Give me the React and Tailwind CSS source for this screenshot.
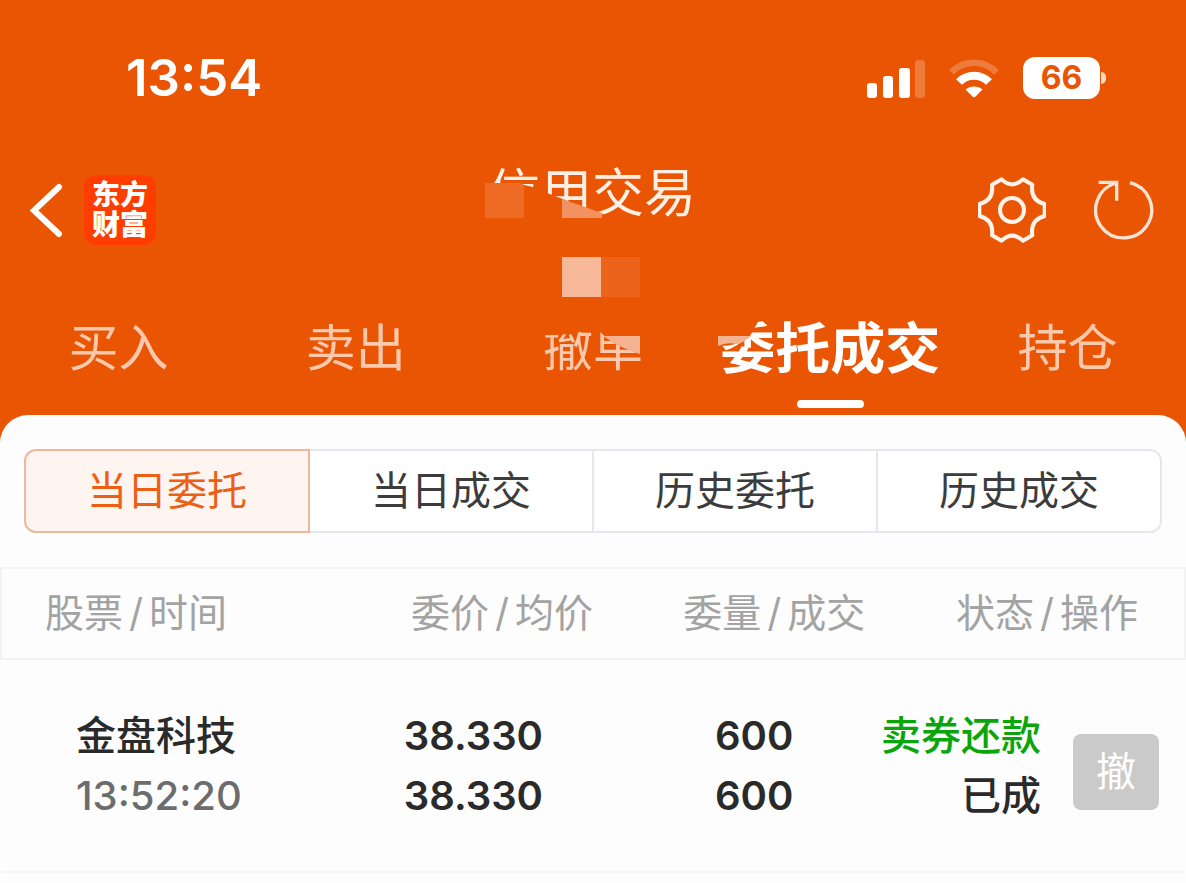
import { useState } from "react";

const TABS = ["买入", "卖出", "撤单", "委托成交", "持仓"];
const SEGMENTS = ["当日委托", "当日成交", "历史委托", "历史成交"];

const HEADINGS = [
  { left: "股票", right: "时间" },
  { left: "委价", right: "均价" },
  { left: "委量", right: "成交" },
  { left: "状态", right: "操作" },
];

const ORDERS = [
  {
    name: "金盘科技",
    time: "13:52:20",
    price: "38.330",
    average: "38.330",
    amount: "600",
    filled: "600",
    side: "卖券还款",
    status: "已成",
  },
];

function SignalIcon() {
  return (
    <svg width="60" height="42" viewBox="0 0 60 42" fill="#fff" aria-hidden>
      <rect x="2" y="26" width="10" height="15" rx="3" />
      <rect x="18" y="19" width="10" height="22" rx="3" />
      <rect x="34" y="11" width="11" height="30" rx="3" />
      <rect x="50" y="3" width="10" height="38" rx="3" opacity="0.22" />
    </svg>
  );
}

function WifiIcon() {
  return (
    <svg width="50" height="42" viewBox="0 0 50 42" fill="none" aria-hidden>
      <path d="M2.500 15.500C14 2.500 36 2.500 47.500 15.500" stroke="#fff" strokeWidth="6.500" opacity="0.22" />
      <path d="M10 25C18 16.500 32 16.500 40 25" stroke="#fff" strokeWidth="8" />
      <path d="M16.500 32.500C21 28.500 29 28.500 33.500 32.500L26.500 39.500Q25 41 23.500 39.500Z" fill="#fff" />
    </svg>
  );
}

function GearIcon() {
  return (
    <svg width="68" height="68" viewBox="112 78 204 204" fill="none" stroke="#fff3ea" strokeLinejoin="round" aria-hidden>
      <path
        d="M183 88Q214 118 247 88L275 104Q268 151 312 162V198Q268 209 275 256L247 272Q214 242 183 272L154 256Q160 209 116 198V162Q160 151 154 104Z"
        strokeWidth="12"
      />
      <circle cx="214" cy="180" r="36" strokeWidth="12" />
    </svg>
  );
}

function RefreshIcon() {
  return (
    <svg width="60" height="68" viewBox="458 78 180 204" fill="none" stroke="#ffe3d3" strokeWidth="10" aria-hidden>
      <path d="M566 98A84 84 0 1 1 524 99" />
      <path d="M472 97H526V152" />
    </svg>
  );
}

// Pixelated strip that hides the account name under the title
function Mosaic() {
  return (
    <svg
      className="pointer-events-none absolute left-1/2 top-[170px] -translate-x-1/2"
      width="360"
      height="200"
      viewBox="413 170 360 200"
      aria-hidden
    >
      <path
        fill="#ea5504"
        d="M485 183L520 184L533 187L547 193L602 214L640 225L759 300V320L750 336Q740 346 719 346L640 354Q620 347 609 340L599 331L590 330Q565 336 543 335L524 320L485 218Z"
      />
      <path fill="#ee6b26" d="M485 183H520L524 185V218H485Z" />
      <path fill="#f19260" d="M562 199L602 213V218H562Z" />
      <path fill="#f6b898" d="M562 257H601V297H562Z" />
      <path fill="#ec641c" d="M601 257H640V297H601Z" />
      <path fill="#f5b491" d="M603 336H640V354Q620 348 603 336Z" />
      <path fill="#f5b491" d="M718 336H751Q744 343 736 344Q726 342 718 346Z" />
    </svg>
  );
}

export default function App() {
  const [tab, setTab] = useState("委托成交");
  const [segment, setSegment] = useState("当日委托");

  return (
    <div className="min-h-screen bg-[#fdfdfd] font-['Inter','Noto_Sans_CJK_SC',sans-serif] text-[#2a2a2a]">
      <div className="relative bg-[#ea5504] text-white">
        <div className="flex h-[156px] items-center justify-between pl-[126px] pr-20">
          <span className="text-[51px] font-semibold">13:54</span>
          <div className="flex items-center gap-6">
            <SignalIcon />
            <WifiIcon />
            <div className="flex items-center gap-px">
              <span className="flex h-[42px] w-[77px] items-center justify-center rounded-xl bg-white text-[32px] font-bold text-[#ea5504]">
                66
              </span>
              <span className="h-3 w-[5px] rounded-r-full bg-[#fbd9c5]" />
            </div>
          </div>
        </div>

        <header className="grid h-[108px] grid-cols-3 items-center pl-[30px] pr-8">
          <div className="flex items-center gap-5">
            <button type="button" aria-label="返回">
              <svg width="34" height="56" viewBox="0 0 34 56" fill="none" stroke="#fff" strokeWidth="6" strokeLinecap="round" aria-hidden>
                <path d="M29 5L4 28.500L29 52" />
              </svg>
            </button>
            <a
              href="#home"
              className="flex h-[70px] w-[72px] items-center justify-center rounded-xl bg-[#ff3d00] text-[28px] font-black leading-[30px]"
            >
              <span className="w-14">东方财富</span>
            </a>
          </div>
          <h1 className="self-start whitespace-nowrap text-center text-[52px] font-normal leading-[76px] text-[#fff0e6]">信用交易</h1>
          <div className="flex items-center justify-end gap-12">
            <button type="button" aria-label="设置">
              <GearIcon />
            </button>
            <button type="button" aria-label="刷新">
              <RefreshIcon />
            </button>
          </div>
        </header>

        <nav className="grid grid-cols-5 pb-[7px] pt-11">
          {TABS.map((item) => (
            <button
              key={item}
              type="button"
              onClick={() => setTab(item)}
              className="flex flex-col items-center gap-3 whitespace-nowrap leading-[80px]"
            >
              <span className={item === tab ? "text-[55px] font-bold" : "text-[50px] font-normal text-[#fcc9ad]"}>{item}</span>
              <span className={item === tab ? "h-2 w-[67px] rounded-full bg-white" : "h-2"} />
            </button>
          ))}
        </nav>

        <Mosaic />
      </div>

      <div className="bg-[#ea5504]">
        <main className="rounded-t-[28px] bg-[#fdfdfd] pt-[34px]">
          <div className="mx-6 flex h-[84px] rounded-xl border-2 border-[#e6e6ec] bg-white">
            {SEGMENTS.map((item) => (
              <button
                key={item}
                type="button"
                onClick={() => setSegment(item)}
                className={
                  item === segment
                    ? "-my-0.5 flex-1 border-2 border-[#efb89c] bg-[#fef4f0] text-[40px] text-[#ec5f14] first:-ml-0.5 first:rounded-l-xl last:-mr-0.5 last:rounded-r-xl"
                    : "flex-1 border-r-2 border-[#e6e6ec] text-[40px] text-[#3c3c3c] last:border-r-0"
                }
              >
                {item}
              </button>
            ))}
          </div>

          <table className="mt-[34px] w-full table-fixed border-collapse">
            <colgroup>
              <col className="w-[30%]" />
              <col className="w-[20%]" />
              <col className="w-[23%]" />
              <col className="w-[27%]" />
            </colgroup>
            <thead>
              <tr className="h-[91px] border-2 border-[#f3f3f3] text-right text-[39px] text-[#a3a3a3]">
                {HEADINGS.map((h) => (
                  <th key={h.left} scope="col" className="whitespace-nowrap p-0 font-normal first:pl-[43px] first:text-left last:pr-[46px]">
                    {h.left}
                    <span className="mx-1.5">/</span>
                    {h.right}
                  </th>
                ))}
              </tr>
            </thead>
            <tbody>
              {ORDERS.map((o) => (
                <tr key={o.time} className="h-[213px] border-b-2 border-[#f5f5f5] text-right text-[40px] font-semibold leading-[60px]">
                  <td className="pl-[75px] text-left">
                    <div className="font-medium">{o.name}</div>
                    <div className="font-medium text-[#6c6c6c]">{o.time}</div>
                  </td>
                  <td className="pr-[50px]">
                    <div>{o.price}</div>
                    <div>{o.average}</div>
                  </td>
                  <td className="pr-[72px]">
                    <div>{o.amount}</div>
                    <div>{o.filled}</div>
                  </td>
                  <td className="pr-[26px]">
                    <div className="flex items-center justify-end gap-8 whitespace-nowrap font-medium">
                      <div>
                        <div className="text-[#0aa50a]">{o.side}</div>
                        <div>{o.status}</div>
                      </div>
                      <button type="button" disabled className="mt-3 h-[76px] w-[86px] rounded-lg bg-[#cacaca] text-[40px] font-normal text-white">
                        撤
                      </button>
                    </div>
                  </td>
                </tr>
              ))}
            </tbody>
          </table>
        </main>
      </div>
    </div>
  );
}
